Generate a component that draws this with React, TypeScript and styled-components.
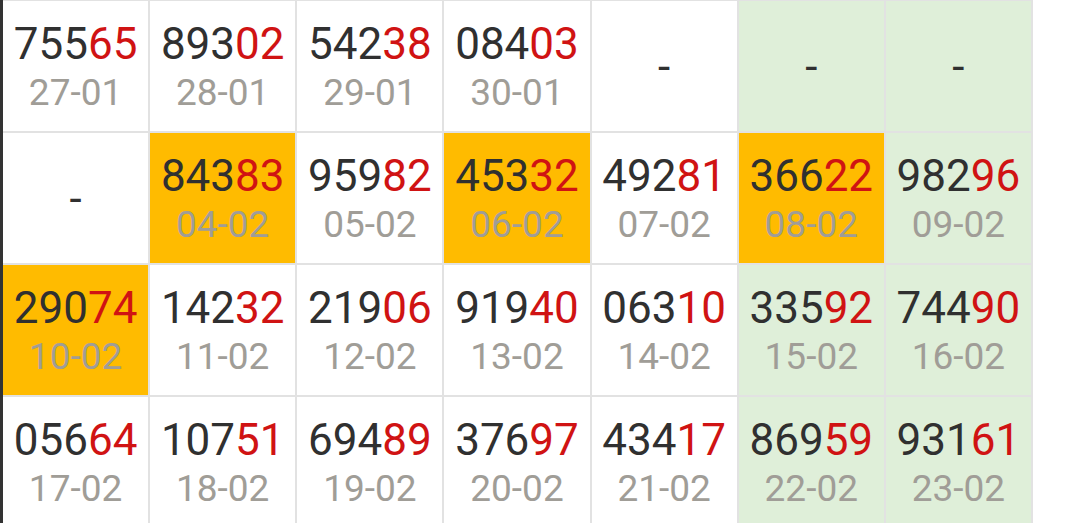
import React from "react";
import styled, { createGlobalStyle } from "styled-components";

const Global = createGlobalStyle`
  html, body { margin: 0; padding: 0; background: #ffffff; overflow: hidden; }
  body { font-family: Roboto, "Noto Sans", sans-serif; }
`;

type Tone = "plain" | "gold" | "green";

const Grid = styled.div`
  box-sizing: border-box;
  display: grid;
  grid-template-columns: repeat(7, 1fr);
  grid-auto-rows: 130px;
  gap: 2px;
  width: 1033px;
  margin-top: -1px;
  padding: 2px 2px 2px 0;
  background: #e2e2e2;
  border-left: 3px solid #333333;
`;

const Cell = styled.div<{ $tone: Tone }>`
  box-sizing: border-box;
  display: flex;
  flex-direction: column;
  align-items: center;
  justify-content: center;
  padding-top: 2px;
  background: ${(p) =>
    p.$tone === "gold" ? "#ffbb00" : p.$tone === "green" ? "#dfefd9" : "#ffffff"};
`;

const Number = styled.div`
  font-size: 44px;
  line-height: 48px;
  color: #303030;
`;

const Tail = styled.span`
  color: #d01313;
`;

const DateText = styled.div`
  margin-top: 3px;
  font-size: 37px;
  line-height: 44px;
  color: #a09d97;
`;

const Dash = styled.div`
  font-size: 44px;
  line-height: 48px;
  color: #303030;
`;

type Item = { n?: string; d?: string; t: Tone };

const rows: Item[][] = [
  [
    { n: "75565", d: "27-01", t: "plain" },
    { n: "89302", d: "28-01", t: "plain" },
    { n: "54238", d: "29-01", t: "plain" },
    { n: "08403", d: "30-01", t: "plain" },
    { t: "plain" },
    { t: "green" },
    { t: "green" },
  ],
  [
    { t: "plain" },
    { n: "84383", d: "04-02", t: "gold" },
    { n: "95982", d: "05-02", t: "plain" },
    { n: "45332", d: "06-02", t: "gold" },
    { n: "49281", d: "07-02", t: "plain" },
    { n: "36622", d: "08-02", t: "gold" },
    { n: "98296", d: "09-02", t: "green" },
  ],
  [
    { n: "29074", d: "10-02", t: "gold" },
    { n: "14232", d: "11-02", t: "plain" },
    { n: "21906", d: "12-02", t: "plain" },
    { n: "91940", d: "13-02", t: "plain" },
    { n: "06310", d: "14-02", t: "plain" },
    { n: "33592", d: "15-02", t: "green" },
    { n: "74490", d: "16-02", t: "green" },
  ],
  [
    { n: "05664", d: "17-02", t: "plain" },
    { n: "10751", d: "18-02", t: "plain" },
    { n: "69489", d: "19-02", t: "plain" },
    { n: "37697", d: "20-02", t: "plain" },
    { n: "43417", d: "21-02", t: "plain" },
    { n: "86959", d: "22-02", t: "green" },
    { n: "93161", d: "23-02", t: "green" },
  ],
];

export default function App() {
  return (
    <>
      <Global />
      <Grid>
        {rows.flat().map((it, i) => (
          <Cell key={i} $tone={it.t}>
            {it.n ? (
              <>
                <Number>
                  {it.n.slice(0, 3)}
                  <Tail>{it.n.slice(3)}</Tail>
                </Number>
                <DateText>{it.d}</DateText>
              </>
            ) : (
              <Dash>-</Dash>
            )}
          </Cell>
        ))}
      </Grid>
    </>
  );
}
